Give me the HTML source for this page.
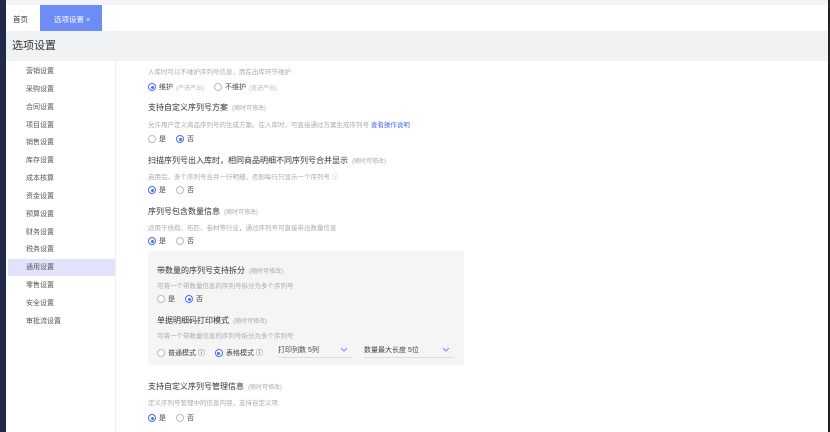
<!DOCTYPE html><html><head><meta charset="utf-8"><style>
*{margin:0;padding:0;box-sizing:border-box}
body{width:830px;height:432px;overflow:hidden;background:#fff;font-family:"Liberation Sans","Noto Sans CJK SC",sans-serif;position:relative;color:#333}
.a{position:absolute;white-space:nowrap}
.t{font-size:8px;color:#333}
.t small{font-size:6px;color:#aaa;margin-left:4px}
.d{font-size:6.5px;color:#aaa}
.r{font-size:7px;color:#444;display:flex;align-items:center}
.rb{display:inline-block;width:8px;height:8px;border:1px solid #bbb;border-radius:50%;margin-right:3px;position:relative;background:#fff}
.rb.on{border-color:#4a6cf0}
.rb.on:after{content:"";position:absolute;left:1.5px;top:1.5px;width:3px;height:3px;border-radius:50%;background:#4a6cf0}
.g{margin-right:10px;display:flex;align-items:center}
.g small{font-size:6px;color:#bbb;margin-left:3px}
.s{font-size:7px;color:#555}
.cv{position:absolute;right:4px;top:2px}
</style></head><body>
<div class="a" style="left:0;top:0;width:6px;height:432px;background:#1f2a4a"></div>
<div class="a" style="right:0;top:0;width:2px;height:432px;background:#222"></div>
<div class="a" style="left:6px;top:0;width:822px;height:5px;background:#f4f4f8"></div>
<div class="a" style="left:6px;top:31px;width:822px;height:30px;background:#f1f2f4"></div>
<div class="a s" style="left:13px;top:14px;font-size:7.5px;color:#333">首页</div>
<div class="a" style="left:40px;top:5px;width:62px;height:26px;background:#6d8cf6;color:#fff;font-size:7.5px;padding:9px 0 0 14px">选项设置 <span style="font-size:7px">×</span></div>
<div class="a" style="left:12px;top:37px;font-size:11px;color:#333">选项设置</div>
<div class="a" style="left:115px;top:61px;width:1px;height:371px;background:#eceef2"></div>
<div class="a" style="left:8px;top:259px;width:107px;height:17px;background:#dfe3fb"></div>
<div class="a s" style="left:26px;top:63px;line-height:17.85px">营销设置<br>采购设置<br>合同设置<br>项目设置<br>销售设置<br>库存设置<br>成本核算<br>资金设置<br>预算设置<br>财务设置<br>税务设置<br>通用设置<br>零售设置<br>安全设置<br>审批流设置</div>

<div class="a d" style="left:148px;top:66px">入库时可以不维护序列号信息，而在出库环节维护</div>
<div class="a r" style="left:148px;top:82px"><span class="g"><i class="rb on"></i>维护<small>(严进严出)</small></span><span class="g"><i class="rb"></i>不维护<small>(宽进严出)</small></span></div>

<div class="a t" style="left:148px;top:102px">支持自定义序列号方案<small>(随时可修改)</small></div>
<div class="a d" style="left:148px;top:119px">允许用户定义商品序列号的生成方案。在入库时，可直接通过方案生成序列号 <span style="color:#4a6cf0">查看操作说明</span></div>
<div class="a r" style="left:148px;top:134px"><span class="g"><i class="rb"></i>是</span><span class="g"><i class="rb on"></i>否</span></div>

<div class="a t" style="left:148px;top:155px">扫描序列号出入库时，相同商品明细不同序列号合并显示<small>(随时可修改)</small></div>
<div class="a d" style="left:148px;top:171px">启用后，多个序列号合并一行明细，否则每行只显示一个序列号 ⓘ</div>
<div class="a r" style="left:148px;top:185px"><span class="g"><i class="rb on"></i>是</span><span class="g"><i class="rb"></i>否</span></div>

<div class="a t" style="left:148px;top:206px">序列号包含数量信息<small>(随时可修改)</small></div>
<div class="a d" style="left:148px;top:222px">适用于线缆、布匹、卷材等行业，通过序列号可直接带出数量信息</div>
<div class="a r" style="left:148px;top:236px"><span class="g"><i class="rb on"></i>是</span><span class="g"><i class="rb"></i>否</span></div>

<div class="a" style="left:148px;top:251px;width:316px;height:114px;background:#f5f5f6"></div>
<div class="a t" style="left:157px;top:265px">带数量的序列号支持拆分<small>(随时可修改)</small></div>
<div class="a d" style="left:157px;top:280px">可将一个带数量信息的序列号拆分为多个序列号</div>
<div class="a r" style="left:157px;top:294px"><span class="g"><i class="rb"></i>是</span><span class="g"><i class="rb on"></i>否</span></div>
<div class="a t" style="left:157px;top:315px">单据明细码打印模式<small>(随时可修改)</small></div>
<div class="a d" style="left:157px;top:330px">可将一个带数量信息的序列号拆分为多个序列号</div>
<div class="a r" style="left:157px;top:348px"><span class="g"><i class="rb"></i>普通模式 ⓘ</span><span class="g"><i class="rb on"></i>表格模式 ⓘ</span></div>
<div class="a r" style="left:278px;top:345px;width:74px;height:13px;border-bottom:1px solid #ddd;padding-bottom:3px">打印列数 5列<svg class="cv" width="8" height="5" viewBox="0 0 8 5"><path d="M1 1L4 4L7 1" fill="none" stroke="#6d8cf6" stroke-width="1"/></svg></div>
<div class="a r" style="left:364px;top:345px;width:90px;height:13px;border-bottom:1px solid #ddd;padding-bottom:3px">数量最大长度 5位<svg class="cv" width="8" height="5" viewBox="0 0 8 5"><path d="M1 1L4 4L7 1" fill="none" stroke="#6d8cf6" stroke-width="1"/></svg></div>

<div class="a t" style="left:148px;top:381px">支持自定义序列号管理信息<small>(随时可修改)</small></div>
<div class="a d" style="left:148px;top:397px">定义序列号管理中的信息内容，支持自定义项</div>
<div class="a r" style="left:148px;top:413px"><span class="g"><i class="rb on"></i>是</span><span class="g"><i class="rb"></i>否</span></div>
</body></html>
